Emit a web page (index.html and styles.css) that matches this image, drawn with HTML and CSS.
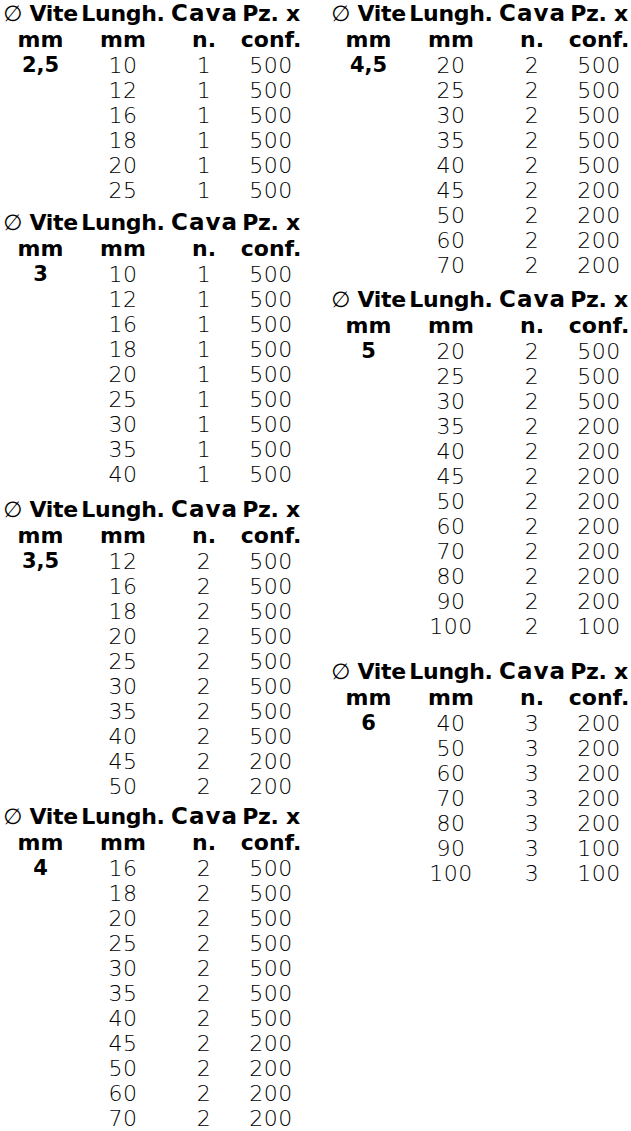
FILE: index.html
```html
<!DOCTYPE html>
<html lang="it">
<head>
<meta charset="utf-8">
<title>Viti</title>
<link rel="stylesheet" href="styles.css">
</head>
<body>
<div class="page">
  <div class="col">
    <div class="tbl">
      <div class="row head"><span class="c"><span class="dia">∅</span>&nbsp;Vite</span><span class="c">Lungh.</span><span class="c cava">Cava</span><span class="c">Pz. x</span></div>
      <div class="row sub"><span class="c">mm</span><span class="c">mm</span><span class="c">n.</span><span class="c">conf.</span></div>
      <div class="row data"><span class="c key">2,5</span><span class="c">10</span><span class="c">1</span><span class="c">500</span></div>
      <div class="row data"><span class="c"></span><span class="c">12</span><span class="c">1</span><span class="c">500</span></div>
      <div class="row data"><span class="c"></span><span class="c">16</span><span class="c">1</span><span class="c">500</span></div>
      <div class="row data"><span class="c"></span><span class="c">18</span><span class="c">1</span><span class="c">500</span></div>
      <div class="row data"><span class="c"></span><span class="c">20</span><span class="c">1</span><span class="c">500</span></div>
      <div class="row data"><span class="c"></span><span class="c">25</span><span class="c">1</span><span class="c">500</span></div>
    </div>
    <div class="tbl gap-6">
      <div class="row head"><span class="c"><span class="dia">∅</span>&nbsp;Vite</span><span class="c">Lungh.</span><span class="c cava">Cava</span><span class="c">Pz. x</span></div>
      <div class="row sub"><span class="c">mm</span><span class="c">mm</span><span class="c">n.</span><span class="c">conf.</span></div>
      <div class="row data"><span class="c key">3</span><span class="c">10</span><span class="c">1</span><span class="c">500</span></div>
      <div class="row data"><span class="c"></span><span class="c">12</span><span class="c">1</span><span class="c">500</span></div>
      <div class="row data"><span class="c"></span><span class="c">16</span><span class="c">1</span><span class="c">500</span></div>
      <div class="row data"><span class="c"></span><span class="c">18</span><span class="c">1</span><span class="c">500</span></div>
      <div class="row data"><span class="c"></span><span class="c">20</span><span class="c">1</span><span class="c">500</span></div>
      <div class="row data"><span class="c"></span><span class="c">25</span><span class="c">1</span><span class="c">500</span></div>
      <div class="row data"><span class="c"></span><span class="c">30</span><span class="c">1</span><span class="c">500</span></div>
      <div class="row data"><span class="c"></span><span class="c">35</span><span class="c">1</span><span class="c">500</span></div>
      <div class="row data"><span class="c"></span><span class="c">40</span><span class="c">1</span><span class="c">500</span></div>
    </div>
    <div class="tbl gap-9">
      <div class="row head"><span class="c"><span class="dia">∅</span>&nbsp;Vite</span><span class="c">Lungh.</span><span class="c cava">Cava</span><span class="c">Pz. x</span></div>
      <div class="row sub"><span class="c">mm</span><span class="c">mm</span><span class="c">n.</span><span class="c">conf.</span></div>
      <div class="row data"><span class="c key">3,5</span><span class="c">12</span><span class="c">2</span><span class="c">500</span></div>
      <div class="row data"><span class="c"></span><span class="c">16</span><span class="c">2</span><span class="c">500</span></div>
      <div class="row data"><span class="c"></span><span class="c">18</span><span class="c">2</span><span class="c">500</span></div>
      <div class="row data"><span class="c"></span><span class="c">20</span><span class="c">2</span><span class="c">500</span></div>
      <div class="row data"><span class="c"></span><span class="c">25</span><span class="c">2</span><span class="c">500</span></div>
      <div class="row data"><span class="c"></span><span class="c">30</span><span class="c">2</span><span class="c">500</span></div>
      <div class="row data"><span class="c"></span><span class="c">35</span><span class="c">2</span><span class="c">500</span></div>
      <div class="row data"><span class="c"></span><span class="c">40</span><span class="c">2</span><span class="c">500</span></div>
      <div class="row data"><span class="c"></span><span class="c">45</span><span class="c">2</span><span class="c">200</span></div>
      <div class="row data"><span class="c"></span><span class="c">50</span><span class="c">2</span><span class="c">200</span></div>
    </div>
    <div class="tbl gap-4">
      <div class="row head"><span class="c"><span class="dia">∅</span>&nbsp;Vite</span><span class="c">Lungh.</span><span class="c cava">Cava</span><span class="c">Pz. x</span></div>
      <div class="row sub"><span class="c">mm</span><span class="c">mm</span><span class="c">n.</span><span class="c">conf.</span></div>
      <div class="row data"><span class="c key">4</span><span class="c">16</span><span class="c">2</span><span class="c">500</span></div>
      <div class="row data"><span class="c"></span><span class="c">18</span><span class="c">2</span><span class="c">500</span></div>
      <div class="row data"><span class="c"></span><span class="c">20</span><span class="c">2</span><span class="c">500</span></div>
      <div class="row data"><span class="c"></span><span class="c">25</span><span class="c">2</span><span class="c">500</span></div>
      <div class="row data"><span class="c"></span><span class="c">30</span><span class="c">2</span><span class="c">500</span></div>
      <div class="row data"><span class="c"></span><span class="c">35</span><span class="c">2</span><span class="c">500</span></div>
      <div class="row data"><span class="c"></span><span class="c">40</span><span class="c">2</span><span class="c">500</span></div>
      <div class="row data"><span class="c"></span><span class="c">45</span><span class="c">2</span><span class="c">200</span></div>
      <div class="row data"><span class="c"></span><span class="c">50</span><span class="c">2</span><span class="c">200</span></div>
      <div class="row data"><span class="c"></span><span class="c">60</span><span class="c">2</span><span class="c">200</span></div>
      <div class="row data"><span class="c"></span><span class="c">70</span><span class="c">2</span><span class="c">200</span></div>
    </div>
  </div>
  <div class="col">
    <div class="tbl">
      <div class="row head"><span class="c"><span class="dia">∅</span>&nbsp;Vite</span><span class="c">Lungh.</span><span class="c cava">Cava</span><span class="c">Pz. x</span></div>
      <div class="row sub"><span class="c">mm</span><span class="c">mm</span><span class="c">n.</span><span class="c">conf.</span></div>
      <div class="row data"><span class="c key">4,5</span><span class="c">20</span><span class="c">2</span><span class="c">500</span></div>
      <div class="row data"><span class="c"></span><span class="c">25</span><span class="c">2</span><span class="c">500</span></div>
      <div class="row data"><span class="c"></span><span class="c">30</span><span class="c">2</span><span class="c">500</span></div>
      <div class="row data"><span class="c"></span><span class="c">35</span><span class="c">2</span><span class="c">500</span></div>
      <div class="row data"><span class="c"></span><span class="c">40</span><span class="c">2</span><span class="c">500</span></div>
      <div class="row data"><span class="c"></span><span class="c">45</span><span class="c">2</span><span class="c">200</span></div>
      <div class="row data"><span class="c"></span><span class="c">50</span><span class="c">2</span><span class="c">200</span></div>
      <div class="row data"><span class="c"></span><span class="c">60</span><span class="c">2</span><span class="c">200</span></div>
      <div class="row data"><span class="c"></span><span class="c">70</span><span class="c">2</span><span class="c">200</span></div>
    </div>
    <div class="tbl gap-8">
      <div class="row head"><span class="c"><span class="dia">∅</span>&nbsp;Vite</span><span class="c">Lungh.</span><span class="c cava">Cava</span><span class="c">Pz. x</span></div>
      <div class="row sub"><span class="c">mm</span><span class="c">mm</span><span class="c">n.</span><span class="c">conf.</span></div>
      <div class="row data"><span class="c key">5</span><span class="c">20</span><span class="c">2</span><span class="c">500</span></div>
      <div class="row data"><span class="c"></span><span class="c">25</span><span class="c">2</span><span class="c">500</span></div>
      <div class="row data"><span class="c"></span><span class="c">30</span><span class="c">2</span><span class="c">500</span></div>
      <div class="row data"><span class="c"></span><span class="c">35</span><span class="c">2</span><span class="c">200</span></div>
      <div class="row data"><span class="c"></span><span class="c">40</span><span class="c">2</span><span class="c">200</span></div>
      <div class="row data"><span class="c"></span><span class="c">45</span><span class="c">2</span><span class="c">200</span></div>
      <div class="row data"><span class="c"></span><span class="c">50</span><span class="c">2</span><span class="c">200</span></div>
      <div class="row data"><span class="c"></span><span class="c">60</span><span class="c">2</span><span class="c">200</span></div>
      <div class="row data"><span class="c"></span><span class="c">70</span><span class="c">2</span><span class="c">200</span></div>
      <div class="row data"><span class="c"></span><span class="c">80</span><span class="c">2</span><span class="c">200</span></div>
      <div class="row data"><span class="c"></span><span class="c">90</span><span class="c">2</span><span class="c">200</span></div>
      <div class="row data"><span class="c"></span><span class="c">100</span><span class="c">2</span><span class="c">100</span></div>
    </div>
    <div class="tbl gap-19">
      <div class="row head"><span class="c"><span class="dia">∅</span>&nbsp;Vite</span><span class="c">Lungh.</span><span class="c cava">Cava</span><span class="c">Pz. x</span></div>
      <div class="row sub"><span class="c">mm</span><span class="c">mm</span><span class="c">n.</span><span class="c">conf.</span></div>
      <div class="row data"><span class="c key">6</span><span class="c">40</span><span class="c">3</span><span class="c">200</span></div>
      <div class="row data"><span class="c"></span><span class="c">50</span><span class="c">3</span><span class="c">200</span></div>
      <div class="row data"><span class="c"></span><span class="c">60</span><span class="c">3</span><span class="c">200</span></div>
      <div class="row data"><span class="c"></span><span class="c">70</span><span class="c">3</span><span class="c">200</span></div>
      <div class="row data"><span class="c"></span><span class="c">80</span><span class="c">3</span><span class="c">200</span></div>
      <div class="row data"><span class="c"></span><span class="c">90</span><span class="c">3</span><span class="c">100</span></div>
      <div class="row data"><span class="c"></span><span class="c">100</span><span class="c">3</span><span class="c">100</span></div>
    </div>
  </div>
</div>
</body>
</html>
```

FILE: styles.css
```css
html, body {
  margin: 0;
  padding: 0;
  background: #ffffff;
  color: #000000;
}

body {
  font-family: "DejaVu Sans", "Liberation Sans", sans-serif;
}

.page {
  display: flex;
  align-items: flex-start;
}

.col {
  display: flex;
  flex-direction: column;
}

.col:first-child {
  width: 328px;
}

.tbl {
  display: flex;
  flex-direction: column;
}

.gap-4 { margin-top: 4px; }
.gap-6 { margin-top: 6px; }
.gap-8 { margin-top: 8px; }
.gap-9 { margin-top: 9px; }
.gap-19 { margin-top: 19px; }

.row {
  display: grid;
  grid-template-columns: 81px 84px 78px 56px;
}

.c {
  display: flex;
  justify-content: center;
  white-space: nowrap;
}

.head {
  height: 27px;
  line-height: 27px;
  font-size: 22px;
  font-weight: 700;
  letter-spacing: -0.3px;
}

.head .cava {
  font-size: 23px;
  letter-spacing: 1px;
  padding-left: 1px;
}

.sub {
  height: 26px;
  line-height: 26px;
  font-size: 22px;
  font-weight: 700;
}

.data {
  height: 25px;
  line-height: 25px;
  font-size: 22px;
  font-weight: 200;
  letter-spacing: 0.5px;
}

.key {
  font-weight: 700;
  font-size: 21px;
  letter-spacing: 0;
}

.dia {
  font-weight: 400;
  font-size: 22px;
}
```
